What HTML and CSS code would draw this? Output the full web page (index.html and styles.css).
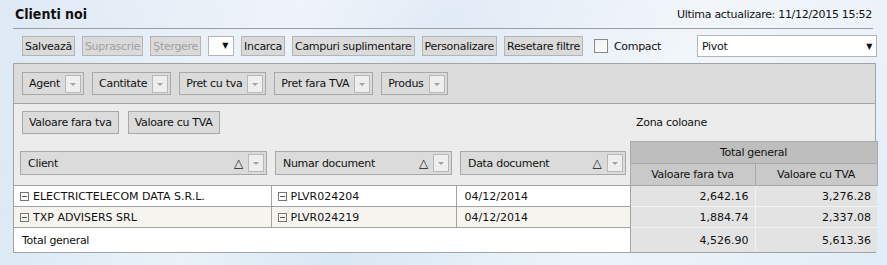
FILE: index.html
```html
<!DOCTYPE html>
<html lang="ro">
<head>
    <meta charset="UTF-8">
    <title>Clienti noi</title>
    <link rel="stylesheet" href="styles.css">
</head>
<body>

<div class="page">
    <div class="header">
        <div class="title">Clienti noi</div>
        <div class="updated">Ultima actualizare: 11/12/2015 15:52</div>
    </div>

    <div class="toolbar">
        <button class="tbtn">Salvează</button>
        <button class="tbtn" disabled>Suprascrie</button>
        <button class="tbtn" disabled>Ştergere</button>
        <div class="mini-select">&#9660;</div>
        <button class="tbtn">Incarca</button>
        <button class="tbtn">Campuri suplimentare</button>
        <button class="tbtn">Personalizare</button>
        <button class="tbtn">Resetare filtre</button>
        <label class="compact"><span class="box"></span>Compact</label>
        <div class="select">Pivot<span class="arrow">&#9660;</span></div>
    </div>

    <div class="pivot">
        <div class="filter-area">
            <div class="field">Agent<span class="dd"></span></div>
            <div class="field">Cantitate<span class="dd"></span></div>
            <div class="field">Pret cu tva<span class="dd"></span></div>
            <div class="field">Pret fara TVA<span class="dd"></span></div>
            <div class="field">Produs<span class="dd"></span></div>
        </div>

        <table class="grid">
            <colgroup>
                <col class="c1"><col class="c2"><col class="c3"><col class="c4"><col class="c5">
            </colgroup>
            <tr class="data-fields">
                <td colspan="3">
                    <div class="fields">
                        <div class="field plain">Valoare fara tva</div>
                        <div class="field plain">Valoare cu TVA</div>
                    </div>
                </td>
                <td colspan="2" class="zone">Zona coloane</td>
            </tr>
            <tr class="head-top">
                <td rowspan="2" class="rh first"><div class="field wide">Client<span class="sort">&#9651;</span><span class="dd"></span></div></td>
                <td rowspan="2" class="rh"><div class="field wide">Numar document<span class="sort">&#9651;</span><span class="dd"></span></div></td>
                <td rowspan="2" class="rh"><div class="field wide">Data document<span class="sort">&#9651;</span><span class="dd"></span></div></td>
                <th colspan="2" class="total-head">Total general</th>
            </tr>
            <tr class="head-sub">
                <th>Valoare fara tva</th>
                <th>Valoare cu TVA</th>
            </tr>
            <tr class="row">
                <td><span class="minus"></span>ELECTRICTELECOM DATA S.R.L.</td>
                <td><span class="minus"></span>PLVR024204</td>
                <td class="pad">04/12/2014</td>
                <td class="num">2,642.16</td>
                <td class="num">3,276.28</td>
            </tr>
            <tr class="row alt">
                <td><span class="minus"></span>TXP ADVISERS SRL</td>
                <td><span class="minus"></span>PLVR024219</td>
                <td class="pad">04/12/2014</td>
                <td class="num">1,884.74</td>
                <td class="num">2,337.08</td>
            </tr>
            <tr class="row total">
                <td colspan="3" class="pad">Total general</td>
                <td class="num">4,526.90</td>
                <td class="num">5,613.36</td>
            </tr>
        </table>
    </div>
</div>

</body>
</html>
```

FILE: styles.css
```css
body {
    margin: 0;
    height: 265px;
    overflow: hidden;
    font-family: "DejaVu Sans", Tahoma, sans-serif;
    font-size: 11px;
    letter-spacing: -0.3px;
    color: #111;
    background-color: #d4e6f3;
    background-image:
        linear-gradient(115deg, rgba(255, 255, 255, 0) 0%, rgba(255, 255, 255, 0.5) 30%, rgba(255, 255, 255, 0.1) 45%, rgba(255, 255, 255, 0.6) 70%, rgba(255, 255, 255, 0.3) 100%),
        linear-gradient(180deg, #dfe9f5 0%, #d3e5f2 100%);
}

.page {
    padding: 0 11px 0 13px;
}

.header {
    display: flex;
    justify-content: space-between;
    align-items: center;
    height: 28px;
    border-bottom: 1px solid #9a9ea3;
    margin-right: 3px;
}

.title {
    font-family: "DejaVu Sans Condensed", "DejaVu Sans", sans-serif;
    font-weight: bold;
    font-size: 14px;
    letter-spacing: 0;
    padding-left: 2px;
}

.updated {
    font-size: 11px;
    padding-right: 1px;
}

.toolbar {
    display: flex;
    align-items: center;
    gap: 7px;
    height: 34px;
    padding-left: 9px;
}

.tbtn {
    font-family: inherit;
    font-size: 11px;
    letter-spacing: -0.3px;
    white-space: nowrap;
    height: 20px;
    padding: 0 2px;
    background: #dadada;
    border: 1px solid #b4b4b4;
    color: #111;
    border-radius: 0;
}

.tbtn:disabled {
    color: #a0a0a0;
}

.mini-select {
    flex-shrink: 0;
    height: 18px;
    background: white;
    border: 1px solid #b4b4b4;
    font-size: 8px;
    text-align: right;
    line-height: 18px;
    padding-right: 5px;
    width: 19px;
}

.compact {
    display: flex;
    align-items: center;
    margin-left: 4px;
    gap: 6px;
}

.box {
    width: 12px;
    height: 12px;
    border: 1px solid #888;
    background: linear-gradient(135deg, #f0f0f0, #ffffff);
}

.select {
    margin-left: auto;
    margin-right: -1px;
    width: 170px;
    height: 20px;
    background: white;
    border: 1px solid #b4b4b4;
    display: flex;
    align-items: center;
    padding: 0 4px;
    justify-content: space-between;
}

.select .arrow {
    font-size: 8px;
}

.pivot {
    border: 1px solid #a3a3a3;
    width: 861px;
    background: #ececec;
}

.filter-area {
    display: flex;
    align-items: center;
    gap: 8px;
    height: 39px;
    padding-left: 8px;
    background: #dbdbdb;
    border-bottom: 1px solid #a3a3a3;
}

.field {
    display: flex;
    align-items: center;
    height: 21px;
    padding: 0 2px 0 6px;
    background: #dbdbdb;
    border: 1px solid #a8a8a8;
    white-space: nowrap;
}

.field.plain {
    padding: 0 6px;
}

.field.wide {
    height: 22px;
    padding-left: 7px;
}

.dd {
    width: 14px;
    height: 16px;
    margin-left: 5px;
    border: 1px solid #b8b8b8;
    background: #eeeeee;
    position: relative;
}

.dd::after {
    content: "";
    position: absolute;
    left: 4px;
    top: 7px;
    border-left: 3px solid transparent;
    border-right: 3px solid transparent;
    border-top: 3px solid #a0a0a0;
}

.sort {
    margin-left: auto;
    font-size: 12px;
}

.fields {
    display: flex;
    gap: 9px;
    padding-left: 8px;
}

.grid {
    border-collapse: collapse;
    width: 100%;
    table-layout: fixed;
}

.c1 { width: 257px; }
.c2 { width: 185px; }
.c3 { width: 174px; }
.c4 { width: 125px; }
.c5 { width: 122px; }

.grid td, .grid th {
    padding: 0;
    white-space: nowrap;
    overflow: hidden;
}

.data-fields td {
    height: 37px;
}

.zone {
    padding-left: 6px !important;
}

.rh {
    padding: 0 4px 0 4px !important;
}

.rh.first {
    padding-left: 6px !important;
}

.grid th {
    font-weight: normal;
    height: 21px;
    background: #c9c9c9;
    border: 1px solid #a9a9a9;
}

.grid th.total-head {
    background: #bebebe;
}

.row td {
    height: 20px;
    background: white;
    border-top: 1px solid #a3a3a3;
    border-right: 1px solid #a3a3a3;
    padding-left: 6px;
    letter-spacing: 0;
}

.row.alt td {
    background: #f6f4ef;
}

.row td.pad {
    padding-left: 8px;
}

.total td.pad {
    letter-spacing: -0.3px;
}

.row td.num {
    background: #e3e3e3;
    text-align: right;
    padding-right: 6px;
    border-top-color: #f2f2f2;
    border-right-color: #f2f2f2;
}

.row td.num + td.num {
    border-right: none;
}

.row td:nth-child(4), .total td:nth-child(2) {
    border-left: 1px solid #a3a3a3;
}

.total td {
    height: 24px;
}

.minus {
    display: inline-block;
    width: 7px;
    height: 7px;
    border: 1px solid #777;
    margin-right: 4px;
    vertical-align: -1px;
    position: relative;
}

.minus::after {
    content: "";
    position: absolute;
    left: 1px;
    right: 1px;
    top: 3px;
    height: 1px;
    background: #555;
}
```
